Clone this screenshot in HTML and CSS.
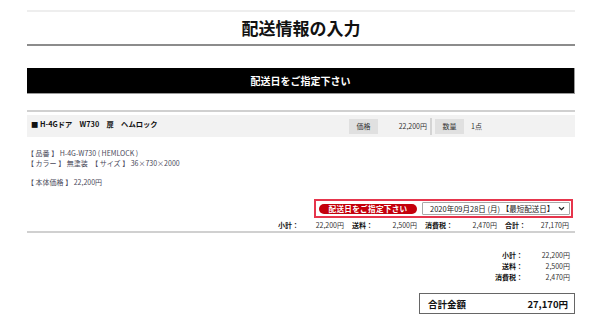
FILE: index.html
```html
<!DOCTYPE html>
<html lang="ja">
<head>
<meta charset="utf-8">
<link rel="stylesheet" href="styles.css">
</head>
<body>
<div class="wrap">
  <h1 class="title">配送情報の入力</h1>
  <div class="bar">配送日をご指定下さい</div>

  <div class="product">
    <div class="prow">
      <div class="pname">■ H-4Gドア　W730　扉　ヘムロック</div>
      <div class="pmeta">
        <span class="tag">価格</span>
        <span class="pval">22,200円</span>
        <span class="sep"></span>
        <span class="tag">数量</span>
        <span class="qval">1点</span>
      </div>
    </div>
    <div class="detail">
      <p>【 品番 】 H-4G-W730 ( HEMLOCK )<br>【 カラー 】 無塗装　【 サイズ 】 36×730×2000</p>
      <p class="gap">【 本体価格 】 22,200円</p>
    </div>
    <div class="daterow">
      <div class="datebox">
        <span class="pill">配送日をご指定下さい</span>
        <div class="select">
          <span>2020年09月28日 (月) 【最短配送日】</span>
          <svg class="chev" width="7" height="5" viewBox="0 0 7 5"><path d="M1 1.2 L3.5 3.6 L6 1.2" fill="none" stroke="#222" stroke-width="1.3"/></svg>
        </div>
      </div>
    </div>
    <div class="subtotals">
      <div class="pair w66"><b>小計：</b><span>22,200円</span></div>
      <div class="pair w65"><b>送料：</b><span>2,500円</span></div>
      <div class="pair w72"><b>消費税：</b><span>2,470円</span></div>
      <div class="pair w64"><b>合計：</b><span>27,170円</span></div>
    </div>
  </div>

  <div class="summary">
    <b>小計：</b><span>22,200円</span>
    <b>送料：</b><span>2,500円</span>
    <b>消費税：</b><span>2,470円</span>
  </div>
  <div class="totalrow">
    <div class="total"><b>合計金額</b><b>27,170円</b></div>
  </div>
</div>
</body>
</html>
```

FILE: styles.css
```css
* { box-sizing: border-box; }
html, body { margin: 0; padding: 0; background: #fff; }
body {
  font-family: "Noto Sans CJK JP", "Liberation Sans", sans-serif;
  color: #222;
  width: 600px;
}
.wrap {
  padding: 10px 25px 0 27px;
}
.title {
  margin: 0;
  border-top: 2px solid #eeeeee;
  border-bottom: 2px solid #8c8c8c;
  height: 36px;
  line-height: 31px;
  text-align: center;
  font-size: 17px;
  font-weight: 700;
  color: #111;
}
.bar {
  margin-top: 22px;
  height: 26px;
  background: #000;
  color: #fff;
  font-size: 10px;
  font-weight: 700;
  text-align: center;
  line-height: 25px;
  border-right: 1px solid #999;
  border-bottom: 1px solid #999;
}
.product {
  margin-top: 16px;
  border-top: 2px solid #d0d0d0;
}
.prow {
  margin-top: 3px;
  height: 22px;
  background: #f2f2f2;
  display: flex;
  align-items: center;
}
.pname {
  flex: 1;
  padding-left: 4px;
  font-size: 7.3px;
  font-weight: 700;
  color: #111;
  margin-top: -5px;
}
.pmeta {
  display: flex;
  align-items: center;
  font-size: 7px;
  color: #333;
}
.tag {
  width: 29px;
  height: 15px;
  line-height: 15px;
  text-align: center;
  background: #e0e0e0;
  color: #333;
}
.pval {
  width: 50px;
  text-align: right;
  padding-right: 1px;
}
.sep {
  width: 2px;
  height: 17px;
  background: #d4d4d4;
  margin: 0 3px 0 2px;
}
.qval {
  width: 111px;
  padding-left: 7px;
}
.detail {
  padding-top: 11px;
  font-size: 7px;
  line-height: 10px;
  color: #4a4a5a;
}
.detail p { margin: 0; }
.detail .gap { margin-top: 9px; }
.daterow {
  display: flex;
  justify-content: flex-end;
  margin-top: 12px;
  padding-right: 2px;
}
.datebox {
  width: 259px;
  height: 19px;
  border: 2px solid #e6354c;
  display: flex;
  align-items: center;
  padding: 0 1px 0 3px;
  gap: 5px;
}
.pill {
  width: 98px;
  height: 10px;
  border-radius: 5px;
  background: #c4000c;
  color: #fff;
  font-size: 7.6px;
  font-weight: 700;
  text-align: center;
  line-height: 10px;
  letter-spacing: 0.3px;
}
.select {
  flex: 1;
  height: 13px;
  border: 1px solid #a8a8a8;
  border-radius: 1px;
  display: flex;
  align-items: center;
  justify-content: space-between;
  padding: 0 4px 0 7px;
  font-size: 7.5px;
  color: #222;
  background: #fff;
}
.chev { display: block; }
.subtotals {
  display: flex;
  justify-content: flex-end;
  gap: 8px;
  padding-right: 6px;
  margin-top: 0;
  height: 15px;
  align-items: center;
  font-size: 7px;
  color: #333;
  border-bottom: 2px solid #d0d0d0;
}
.pair {
  display: flex;
  justify-content: space-between;
}
.pair b { font-weight: 700; color: #111; }
.w66 { width: 66px; }
.w65 { width: 65px; }
.w72 { width: 72px; }
.w64 { width: 64px; }
.summary {
  margin-top: 17px;
  display: grid;
  grid-template-columns: auto 47px;
  justify-content: end;
  padding-right: 5px;
  font-size: 7px;
  line-height: 11px;
  color: #333;
}
.summary b { text-align: right; color: #111; }
.summary span { text-align: right; }
.totalrow {
  display: flex;
  justify-content: flex-end;
  margin-top: 10px;
}
.total {
  width: 156px;
  height: 21px;
  border: 1.5px solid #666;
  display: flex;
  align-items: center;
  justify-content: space-between;
  padding: 0 6px 0 8px;
  font-size: 9.5px;
  color: #111;
}
```
